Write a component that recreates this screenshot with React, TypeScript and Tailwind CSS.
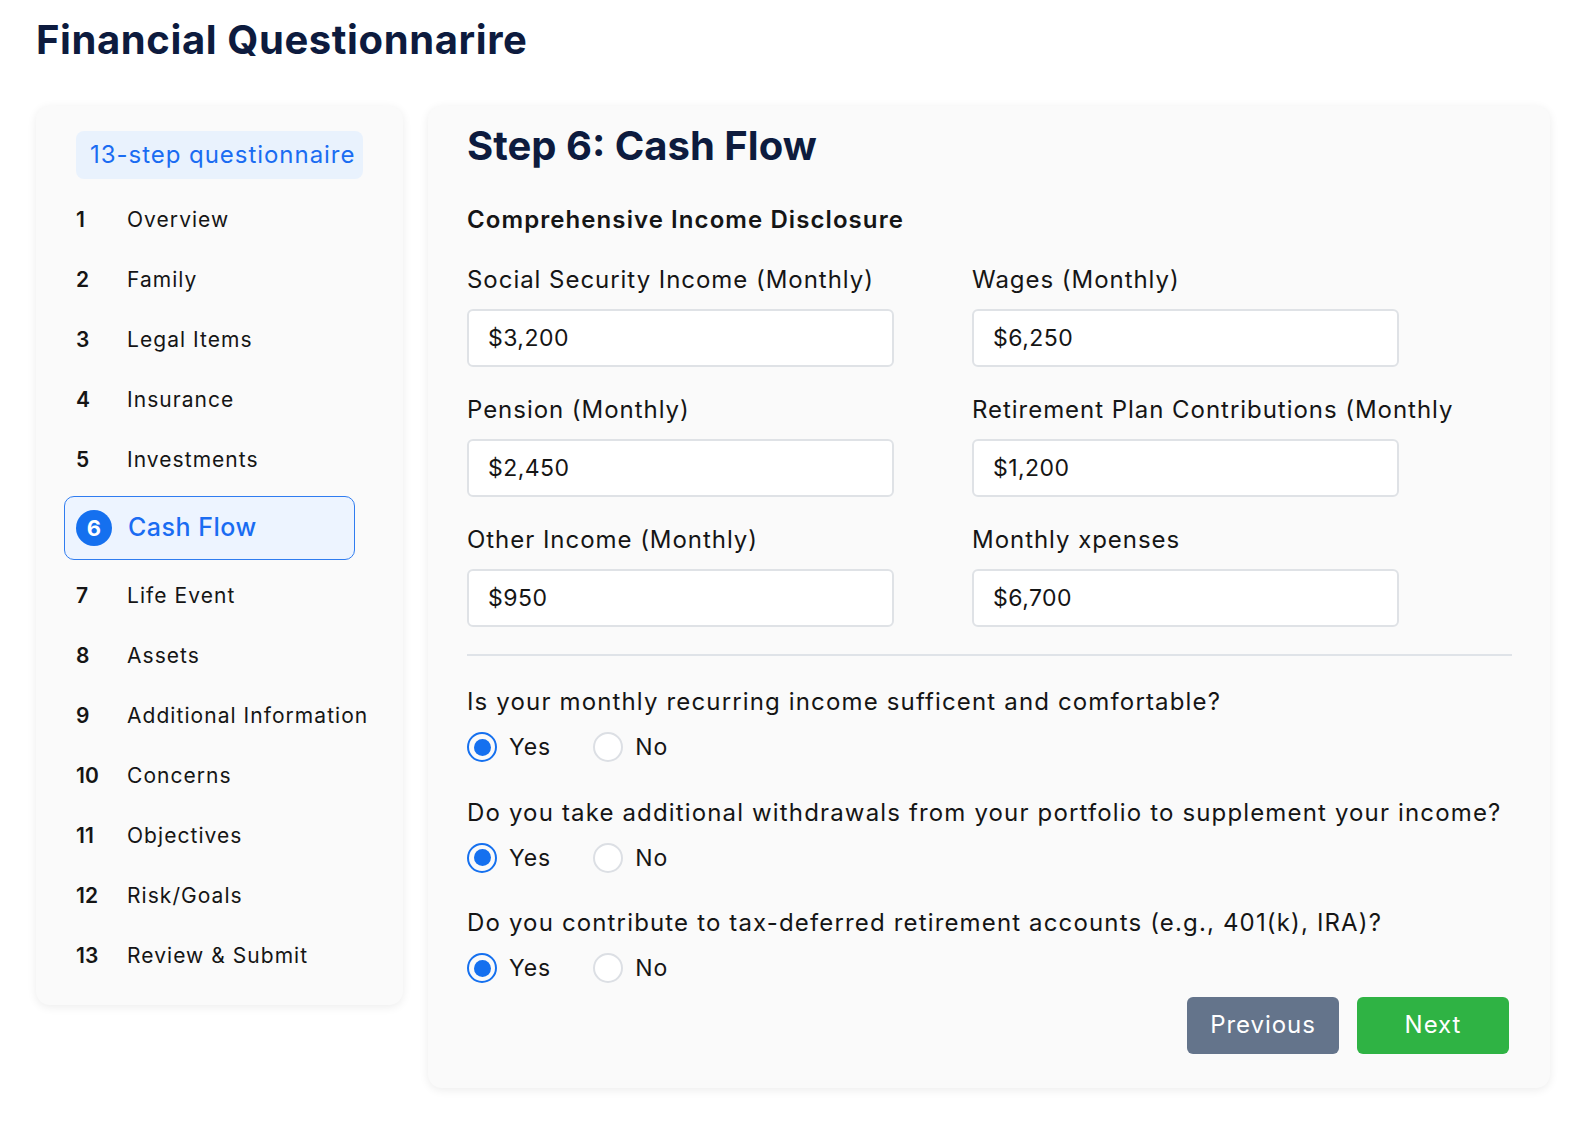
import React, { useState } from 'react';

const steps = [
  'Overview',
  'Family',
  'Legal Items',
  'Insurance',
  'Investments',
  'Cash Flow',
  'Life Event',
  'Assets',
  'Additional Information',
  'Concerns',
  'Objectives',
  'Risk/Goals',
  'Review & Submit',
];

const fields = [
  { label: 'Social Security Income (Monthly)', value: '$3,200' },
  { label: 'Wages (Monthly)', value: '$6,250' },
  { label: 'Pension (Monthly)', value: '$2,450' },
  { label: 'Retirement Plan Contributions (Monthly', value: '$1,200' },
  { label: 'Other Income (Monthly)', value: '$950' },
  { label: 'Monthly xpenses', value: '$6,700' },
];

const questions = [
  'Is your monthly recurring income sufficent and comfortable?',
  'Do you take additional withdrawals from your portfolio to supplement your income?',
  'Do you contribute to tax-deferred retirement accounts (e.g., 401(k), IRA)?',
];

const Radio: React.FC<{ checked: boolean; label: string; onClick: () => void }> = ({ checked, label, onClick }) => (
  <button onClick={onClick} className="flex items-center gap-[12px]">
    {checked ? (
      <span className="w-[30px] h-[30px] rounded-full border-[2px] border-[#1570ef] flex items-center justify-center">
        <span className="w-[17px] h-[17px] rounded-full bg-[#1570ef]" />
      </span>
    ) : (
      <span className="w-[30px] h-[30px] rounded-full border-[2px] border-[#dcdfe4] bg-white" />
    )}
    <span className="text-[23px] text-[#151515] tracking-[0.04em]">{label}</span>
  </button>
);

const Sidebar: React.FC<{ active: number }> = ({ active }) => (
  <aside className="w-[367px] shrink-0 self-start bg-[#fafafa] rounded-[14px] shadow-[0_2px_10px_rgba(0,0,0,0.08)] pt-[25px] pb-[19px]">
    <div className="ml-[40px] w-[287px] h-[48px] rounded-[8px] bg-[#e9f2fd] flex items-center pl-[14px] text-[24px] text-[#1a6cf2] tracking-[0.04em]">
      13-step questionnaire
    </div>
    <ul className="mt-[11px]">
      {steps.map((s, i) => {
        const n = i + 1;
        if (n === active) {
          return (
            <li
              key={s}
              className="ml-[28px] w-[291px] h-[64px] my-[6px] rounded-[10px] border-[1.5px] border-[#2f7cf0] bg-[#edf4ff] flex items-center pl-[11px]"
            >
              <span className="w-[36px] h-[36px] rounded-full bg-[#1570ef] text-white text-[22px] font-bold flex items-center justify-center">
                {n}
              </span>
              <span className="ml-[16px] text-[25px] font-medium text-[#1a6cf2] tracking-[0.02em]">{s}</span>
            </li>
          );
        }
        return (
          <li key={s} className="ml-[40px] h-[60px] flex items-center text-[21px] text-[#151515]">
            <span className="w-[51px] font-semibold">{n}</span>
            <span className="tracking-[0.05em]">{s}</span>
          </li>
        );
      })}
    </ul>
  </aside>
);

export default function App() {
  const [answers, setAnswers] = useState<boolean[]>([true, true, true]);

  return (
    <div
      className="min-h-screen bg-white px-[36px] pt-[12px]"
      style={{ fontFamily: 'Inter, "Noto Sans", sans-serif' }}
    >
      <h1 className="text-[40px] font-bold text-[#0d1b3e] leading-[56px] tracking-[0.015em]">Financial Questionnarire</h1>

      <div className="flex gap-[25px] mt-[38px]">
        <Sidebar active={6} />

        <main className="w-[1122px] bg-[#fafafa] rounded-[14px] shadow-[0_2px_10px_rgba(0,0,0,0.08)] pl-[39px] pr-[38px] pt-[14px] pb-[34px]">
          <h2 className="text-[40px] font-bold text-[#0d1b3e] leading-[52px]">Step 6: Cash Flow</h2>
          <h3 className="mt-[33px] text-[24px] font-semibold text-[#151515] leading-[30px] tracking-[0.045em]">
            Comprehensive Income Disclosure
          </h3>

          <div className="mt-[30px] grid grid-cols-[427px_427px] gap-x-[78px] gap-y-[28px]">
            {fields.map((f) => (
              <div key={f.label}>
                <label className="block text-[24px] text-[#151515] leading-[30px] whitespace-nowrap tracking-[0.04em]">
                  {f.label}
                </label>
                <input
                  readOnly
                  value={f.value}
                  className="mt-[14px] w-full h-[58px] rounded-[6px] border-[2px] border-[#dfe2e6] bg-white px-[19px] text-[23px] text-[#151515] tracking-[0.02em] outline-none"
                />
              </div>
            ))}
          </div>

          <div className="mt-[27px] h-[2px] bg-[#dfe3e8]" />

          <div className="mt-[31px] flex flex-col gap-[33px]">
            {questions.map((q, i) => (
              <div key={q}>
                <p className="text-[24px] text-[#151515] leading-[30px] tracking-[0.048em] whitespace-nowrap">{q}</p>
                <div className="mt-[13px] flex items-center gap-[42px]">
                  <Radio
                    checked={answers[i]}
                    label="Yes"
                    onClick={() => setAnswers(answers.map((a, j) => (j === i ? true : a)))}
                  />
                  <Radio
                    checked={!answers[i]}
                    label="No"
                    onClick={() => setAnswers(answers.map((a, j) => (j === i ? false : a)))}
                  />
                </div>
              </div>
            ))}
          </div>

          <div className="mt-[11px] flex justify-end gap-[18px] pr-[3px]">
            <button className="w-[152px] h-[57px] rounded-[6px] bg-[#64748b] text-white text-[24px] tracking-[0.04em]">
              Previous
            </button>
            <button className="w-[152px] h-[57px] rounded-[6px] bg-[#2fb344] text-white text-[24px] tracking-[0.04em]">
              Next
            </button>
          </div>
        </main>
      </div>
    </div>
  );
}
